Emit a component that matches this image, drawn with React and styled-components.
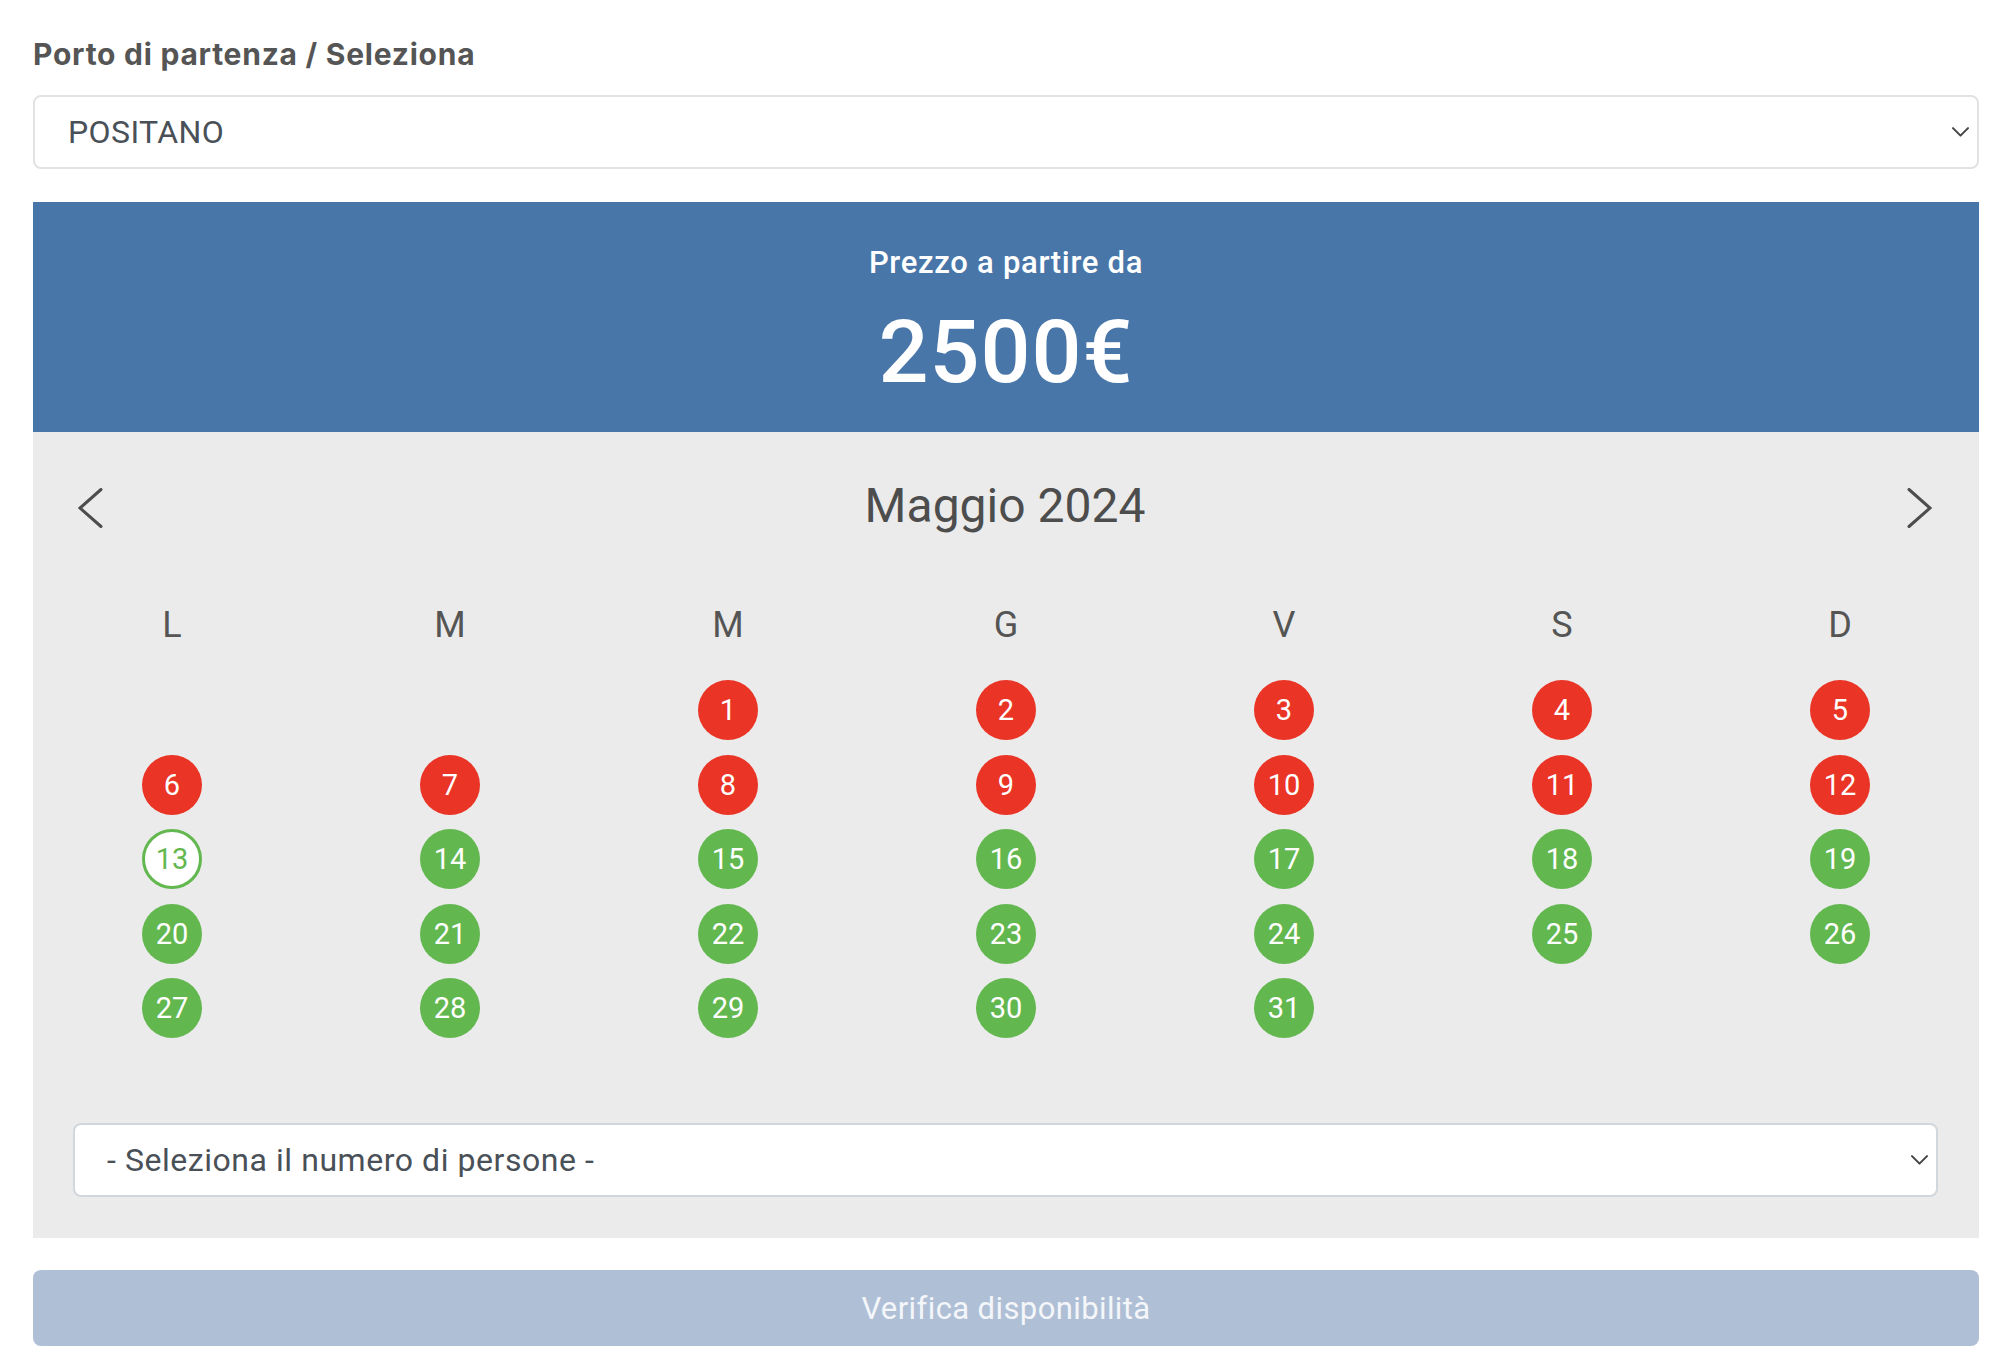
import React from "react";
import styled, { createGlobalStyle, css } from "styled-components";

const GlobalStyle = createGlobalStyle`
  html, body {
    margin: 0;
    padding: 0;
    background: #fff;
  }
  body {
    font-family: Roboto, "Liberation Sans", Arial, sans-serif;
    color: #555;
  }
  * {
    box-sizing: border-box;
  }
`;

const Wrapper = styled.div`
  width: 1946px;
  margin-left: 33px;
  padding-top: 32px;
  padding-bottom: 26px;
`;

const Label = styled.label`
  display: block;
  font-family: Inter, Roboto, sans-serif;
  font-size: 30px;
  line-height: 45px;
  font-weight: 700;
  letter-spacing: 0.75px;
  color: #555;
  margin-bottom: 18px;
`;

const SelectBox = styled.div`
  display: flex;
  align-items: center;
  justify-content: space-between;
  height: 74px;
  padding: 0 8px 0 ${(p) => p.$padLeft}px;
  background: #fff;
  border: 2px solid ${(p) => p.$border};
  border-radius: 8px;
  font-size: 32px;
  letter-spacing: ${(p) => p.$spacing}px;
  color: #495057;
  margin: ${(p) => p.$margin};
`;

const PriceBanner = styled.div`
  margin-top: 33px;
  background: #4876a9;
  color: #fff;
  text-align: center;
  padding: 41px 0 36px;
`;

const PriceCaption = styled.div`
  font-size: 31px;
  line-height: 40px;
  font-weight: 500;
  letter-spacing: 0.7px;
`;

const PriceValue = styled.div`
  margin-top: 25px;
  font-size: 88px;
  line-height: 88px;
  font-weight: 500;
  letter-spacing: 1px;
`;

const CalendarPanel = styled.div`
  background: #ebebeb;
  padding: 44px 0 41px;
`;

const MonthHeader = styled.div`
  display: flex;
  align-items: center;
  justify-content: space-between;
  height: 60px;
  padding: 0 47px 0 45px;
`;

const MonthTitle = styled.div`
  font-size: 48px;
  line-height: 60px;
  color: #4d4d4d;
`;

const NavButton = styled.button`
  display: flex;
  align-items: center;
  justify-content: center;
  padding: 0;
  margin-top: 3px;
  border: none;
  background: none;
  cursor: pointer;
`;

const Grid = styled.div`
  display: grid;
  grid-template-columns: repeat(7, 1fr);
  justify-items: center;
`;

const WeekRow = styled(Grid)`
  margin-top: 68px;
`;

const WeekDay = styled.div`
  font-size: 36px;
  line-height: 43px;
  color: #555;
`;

const DaysGrid = styled(Grid)`
  margin-top: 33px;
  row-gap: 14.6px;
`;

const Day = styled.div`
  width: 60px;
  height: 60px;
  border-radius: 50%;
  display: flex;
  align-items: center;
  justify-content: center;
  font-size: 29px;
  color: #fff;
  ${(p) =>
    p.$status === "busy" &&
    css`
      background: #ea3425;
    `}
  ${(p) =>
    p.$status === "free" &&
    css`
      background: #63b74f;
    `}
  ${(p) =>
    p.$status === "today" &&
    css`
      background: #fff;
      border: 3px solid #63b74f;
      color: #63b74f;
    `}
`;

const Empty = styled.div`
  width: 60px;
  height: 60px;
`;

const SubmitButton = styled.button`
  display: block;
  width: 100%;
  height: 76px;
  margin-top: 32px;
  border: none;
  border-radius: 8px;
  background: #afc0d6;
  color: #f4f6f9;
  font-family: inherit;
  font-size: 31px;
  letter-spacing: 0.4px;
`;

const Chevron = ({ size = 17 }) => (
  <svg width={size} height={size * 0.6} viewBox="0 0 17 10" fill="none">
    <polyline
      points="1,1 8.5,8.5 16,1"
      stroke="#444"
      strokeWidth="2"
      strokeLinecap="round"
      strokeLinejoin="round"
    />
  </svg>
);

const Arrow = ({ dir }) => (
  <svg width="25" height="40" viewBox="0 0 25 40" fill="none">
    <polyline
      points={dir === "left" ? "23,1.5 2,20 23,38.5" : "2,1.5 23,20 2,38.5"}
      stroke="#4d4d4d"
      strokeWidth="3"
      strokeLinecap="round"
      strokeLinejoin="miter"
    />
  </svg>
);

const weekDays = ["L", "M", "M", "G", "V", "S", "D"];

const statusOf = (d) => (d <= 12 ? "busy" : d === 13 ? "today" : "free");

export default function App() {
  const days = Array.from({ length: 31 }, (_, i) => i + 1);
  return (
    <Wrapper>
      <GlobalStyle />
      <Label>Porto di partenza / Seleziona</Label>
      <SelectBox $padLeft={33} $spacing={0.4} $border="#e2e2e2" $margin="0">
        <span>POSITANO</span>
        <Chevron />
      </SelectBox>

      <PriceBanner>
        <PriceCaption>Prezzo a partire da</PriceCaption>
        <PriceValue>2500€</PriceValue>
      </PriceBanner>

      <CalendarPanel>
        <MonthHeader>
          <NavButton aria-label="Mese precedente">
            <Arrow dir="left" />
          </NavButton>
          <MonthTitle>Maggio 2024</MonthTitle>
          <NavButton aria-label="Mese successivo">
            <Arrow dir="right" />
          </NavButton>
        </MonthHeader>

        <WeekRow>
          {weekDays.map((w, i) => (
            <WeekDay key={i}>{w}</WeekDay>
          ))}
        </WeekRow>

        <DaysGrid>
          <Empty />
          <Empty />
          {days.map((d) => (
            <Day key={d} $status={statusOf(d)}>
              {d}
            </Day>
          ))}
        </DaysGrid>

        <SelectBox
          $padLeft={32}
          $spacing={0.55}
          $border="#d2d7dc"
          $margin="85px 41px 0 40px"
        >
          <span>- Seleziona il numero di persone -</span>
          <Chevron />
        </SelectBox>
      </CalendarPanel>

      <SubmitButton>Verifica disponibilità</SubmitButton>
    </Wrapper>
  );
}
